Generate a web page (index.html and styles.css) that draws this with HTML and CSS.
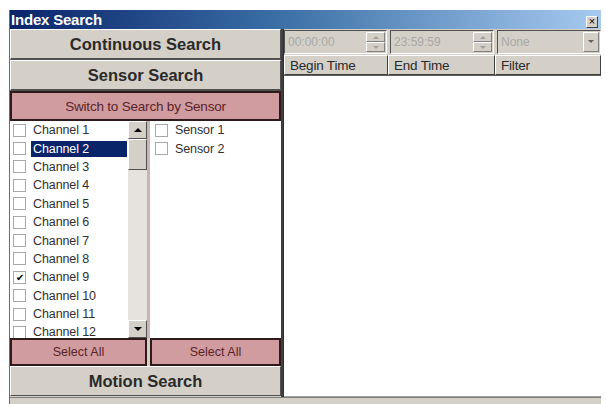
FILE: index.html
```html
<!DOCTYPE html>
<html>
<head>
  <title>Index Search</title>
  <link rel="stylesheet" href="styles.css">
</head>
<body>
  <div class="window">
    <!-- Title bar -->
    <div class="titlebar">
      <span class="title">Index Search</span>
      <span class="close">&times;</span>
    </div>

    <div class="content">
      <!-- Left side: search modes -->
      <div class="left">
        <button class="mode">Continuous Search</button>
        <button class="mode">Sensor Search</button>
        <button class="pink switch">Switch to Search by Sensor</button>

        <div class="lists">
          <div class="channels">
            <ul class="items">
              <li><span class="box"></span><span class="label">Channel 1</span></li>
              <li class="selected"><span class="box"></span><span class="label">Channel 2</span></li>
              <li><span class="box"></span><span class="label">Channel 3</span></li>
              <li><span class="box"></span><span class="label">Channel 4</span></li>
              <li><span class="box"></span><span class="label">Channel 5</span></li>
              <li><span class="box"></span><span class="label">Channel 6</span></li>
              <li><span class="box"></span><span class="label">Channel 7</span></li>
              <li><span class="box"></span><span class="label">Channel 8</span></li>
              <li><span class="box checked">&#10004;</span><span class="label">Channel 9</span></li>
              <li><span class="box"></span><span class="label">Channel 10</span></li>
              <li><span class="box"></span><span class="label">Channel 11</span></li>
              <li><span class="box"></span><span class="label">Channel 12</span></li>
            </ul>
            <div class="scrollbar">
              <div class="arrow up"></div>
              <div class="thumb"></div>
              <div class="track"></div>
              <div class="arrow down"></div>
            </div>
          </div>
          <div class="sensors">
            <ul class="items">
              <li><span class="box"></span><span class="label">Sensor 1</span></li>
              <li><span class="box"></span><span class="label">Sensor 2</span></li>
            </ul>
          </div>
        </div>

        <div class="select-row">
          <button class="pink">Select All</button>
          <button class="pink">Select All</button>
        </div>
        <button class="mode motion">Motion Search</button>
      </div>

      <!-- Right side: results -->
      <div class="right">
        <div class="controls">
          <div class="field time">
            <span class="value">00:00:00</span>
            <span class="spin"><i></i><i></i></span>
          </div>
          <div class="field time">
            <span class="value">23:59:59</span>
            <span class="spin"><i></i><i></i></span>
          </div>
          <div class="field filter">
            <span class="value">None</span>
            <span class="drop"></span>
          </div>
        </div>
        <div class="header">
          <div class="col c1">Begin Time</div>
          <div class="col c2">End Time</div>
          <div class="col c3">Filter</div>
        </div>
        <div class="results"></div>
      </div>
    </div>
    <div class="statusbar"></div>
  </div>
</body>
</html>
```

FILE: styles.css
```css
/* Basic reset */
* {
  box-sizing: border-box;
  margin: 0;
  padding: 0;
}

body {
  font-family: "Liberation Sans", Arial, sans-serif;
  background-color: #ffffff;
  color: #202020;
  width: 606px;
  height: 404px;
  overflow: hidden;
}

/* Window frame */
.window {
  margin: 10px 0 0 9px;
  width: 592px;
  height: 394px;
  background-color: #d4d0c8;
  border-left: 1px solid #6e6e6e;
  display: flex;
  flex-direction: column;
}

.titlebar {
  height: 19px;
  background: linear-gradient(to right, #0a246a 0%, #3a6ea5 45%, #a6caf0 100%);
  display: flex;
  align-items: center;
  justify-content: space-between;
  padding: 0 3px 0 1px;
}

.title {
  color: #ffffff;
  font-weight: bold;
  font-size: 15px;
  letter-spacing: -0.2px;
}

.close {
  width: 12px;
  height: 12px;
  margin-top: 4px;
  background-color: #d4d0c8;
  border: 1px solid;
  border-color: #ffffff #404040 #404040 #ffffff;
  font-size: 11px;
  line-height: 9px;
  text-align: center;
  color: #000000;
}

.content {
  display: flex;
  height: 368px;
}

/* Left column */
.left {
  width: 273px;
  display: flex;
  flex-direction: column;
  border-right: 2px solid #404040;
}

button {
  font-family: "Liberation Sans", Arial, sans-serif;
  background-color: #d4d0c8;
  border: 1px solid;
  border-color: #ffffff #505050 #505050 #ffffff;
  cursor: pointer;
}

.mode {
  height: 31px;
  font-size: 16.5px;
  font-weight: bold;
  color: #2a2a2a;
  border-bottom: 2px solid #505050;
}

.pink {
  background-color: #d09ca0; /* dusty pink */
  color: #5a2328;
  font-size: 12.5px;
  border: 2px solid #2e1a1a;
}

.switch {
  height: 30px;
  font-size: 13.5px;
  letter-spacing: -0.2px;
}

.lists {
  height: 217px;
  display: flex;
  background-color: #ffffff;
}

.channels {
  width: 140px;
  display: flex;
  overflow: hidden;
  border-right: 3px solid #c9b4b6;
}

.sensors {
  flex: 1;
  padding-left: 2px;
}

.items {
  list-style: none;
  flex: 1;
  font-size: 12.5px;
  color: #303030;
}

.items li {
  height: 18.4px;
  display: flex;
  align-items: center;
  padding-left: 3px;
}

.box {
  width: 13px;
  height: 13px;
  border: 1px solid #a8a8a8;
  background-color: #ffffff;
  margin-right: 5px;
  font-size: 10px;
  line-height: 11px;
  text-align: center;
  color: #000000;
}

.label {
  padding: 1px 3px 1px 2px;
  letter-spacing: -0.1px;
}

.selected .label {
  background-color: #0a246a;
  color: #ffffff;
  flex: 1;
  margin-right: 1px;
}

/* Scrollbar */
.scrollbar {
  width: 19px;
  display: flex;
  flex-direction: column;
  background-color: #e6e3de;
}

.arrow {
  height: 18px;
  background-color: #d4d0c8;
  border: 1px solid;
  border-color: #ffffff #505050 #505050 #ffffff;
  position: relative;
}

.arrow::after {
  content: "";
  position: absolute;
  left: 5px;
  border-left: 4px solid transparent;
  border-right: 4px solid transparent;
}

.up::after {
  top: 6px;
  border-bottom: 4px solid #000000;
}

.down::after {
  top: 6px;
  border-top: 4px solid #000000;
}

.thumb {
  height: 31px;
  background-color: #d4d0c8;
  border: 1px solid;
  border-color: #ffffff #505050 #505050 #ffffff;
}

.track {
  flex: 1;
}

.select-row {
  display: flex;
  gap: 3px;
  height: 28px;
}

.select-row .pink {
  flex: 1;
}

.select-row .pink:first-child {
  flex: 0 0 137px;
}

.motion {
  height: 30px;
  border-bottom: 1px solid #505050;
}

/* Right column */
.right {
  flex: 1;
  display: flex;
  flex-direction: column;
  border-left: 1px solid #303030;
}

.controls {
  display: flex;
  height: 25px;
  gap: 3px;
  padding-top: 1px;
}

.field {
  height: 24px;
  display: flex;
  align-items: center;
  justify-content: space-between;
  border: 1px solid;
  border-color: #505050 #ffffff #ffffff #505050;
  background-color: #d4d0c8;
  font-size: 12px;
  color: #a8a8a4;
  padding-left: 3px;
}

.time {
  width: 104px;
}

.field:first-child {
  width: 103px;
}

.filter {
  flex: 1;
}

.spin {
  width: 19px;
  height: 20px;
  display: flex;
  flex-direction: column;
  margin-right: 1px;
}

.spin i {
  flex: 1;
  border: 1px solid;
  border-color: #ffffff #808080 #808080 #ffffff;
  position: relative;
}

.spin i::after {
  content: "";
  position: absolute;
  left: 6px;
  top: 3px;
  border-left: 3px solid transparent;
  border-right: 3px solid transparent;
}

.spin i:first-child::after {
  border-bottom: 3px solid #a0a0a0;
}

.spin i:last-child::after {
  border-top: 3px solid #a0a0a0;
}

.drop {
  width: 16px;
  height: 20px;
  margin-right: 1px;
  border: 1px solid;
  border-color: #ffffff #808080 #808080 #ffffff;
  position: relative;
}

.drop::after {
  content: "";
  position: absolute;
  left: 4px;
  top: 7px;
  border-left: 3px solid transparent;
  border-right: 3px solid transparent;
  border-top: 3px solid #606060;
}

.header {
  display: flex;
  height: 21px;
  margin-top: 1px;
  border-bottom: 1px solid #606060;
}

.col {
  font-size: 13.5px;
  color: #2a2a2a;
  padding: 2px 0 0 5px;
  border: 1px solid;
  border-color: #ffffff #404040 #404040 #ffffff;
  letter-spacing: -0.2px;
}

.c1 {
  width: 104px;
}

.c2 {
  width: 107px;
}

.c3 {
  flex: 1;
}

.results {
  flex: 1;
  background-color: #ffffff;
  border-bottom: 1px solid #a0a0a0;
}

.statusbar {
  flex: 1;
  border-top: 1px solid #808080;
  background-color: #d4d0c8;
}
```
